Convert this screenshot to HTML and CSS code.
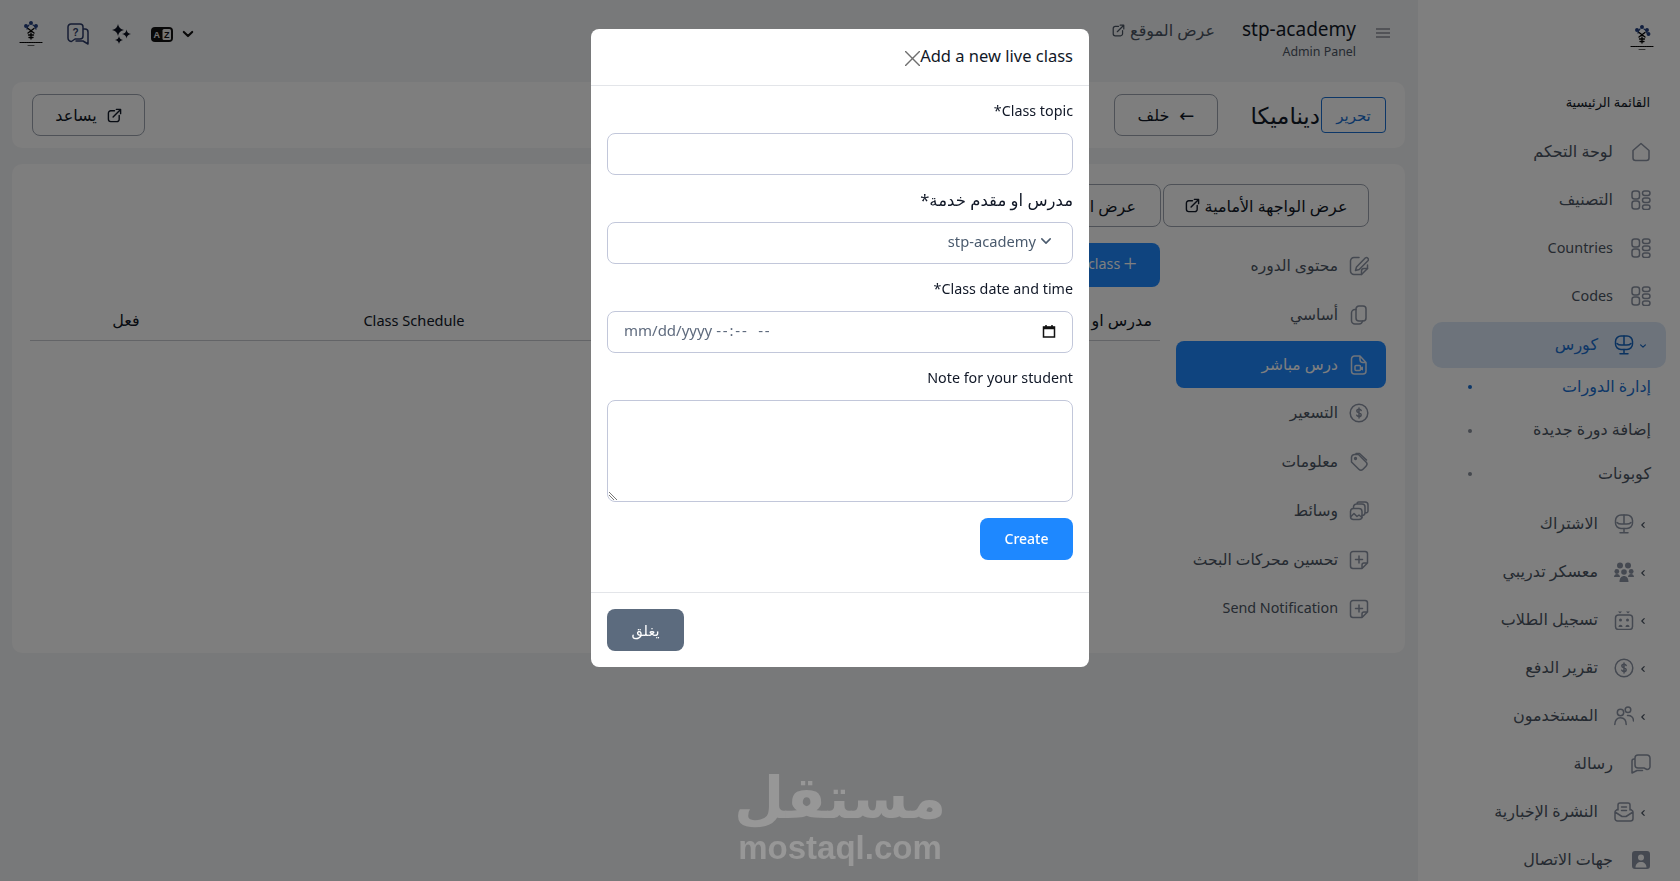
FILE: index.html
```html
<!DOCTYPE html>
<html lang="ar" dir="rtl">
<head>
<meta charset="utf-8">
<title>Add a new live class</title>
<link rel="stylesheet" href="styles.css">
</head>
<body>
<svg class="defs" aria-hidden="true">
  <symbol id="i-home" viewBox="0 0 20 20"><path d="M2 8.500 10 1.500l8 7v7.500a2.500 2.500 0 0 1-2.500 2.500h-11A2.500 2.500 0 0 1 2 16z"/></symbol>
  <symbol id="i-cat" viewBox="0 0 20 20"><rect x="1" y="1" width="7.500" height="8" rx="2.500"/><rect x="1" y="11" width="7.500" height="8" rx="2.500"/><rect x="11.500" y="1" width="7.500" height="4.500" rx="2.200"/><rect x="11.500" y="8" width="7.500" height="4.500" rx="2.200"/><rect x="11.500" y="15" width="7.500" height="4.500" rx="2.200"/></symbol>
  <symbol id="i-course" viewBox="0 0 20 20"><rect x="1.500" y="1" width="17" height="13.500" rx="5.500"/><path d="M10 1v9M3 8.500c2 2.300 4 1.500 7 1.500s5 .8 7-1.500M10 14.500v4M6 18.700h8"/></symbol>
  <symbol id="i-team" viewBox="0 0 20 20"><g class="fill"><circle cx="6" cy="3.500" r="3"/><circle cx="14" cy="3.500" r="3"/><circle cx="2.800" cy="9.500" r="2.400"/><circle cx="17.200" cy="9.500" r="2.400"/><circle cx="10" cy="10" r="2.800"/><path d="M0 15c0-2 1.500-3 3-3s3 1 3 3zM14 15c0-2 1.500-3 3-3s3 1 3 3zM5.500 20c0-4 2-6 4.500-6s4.500 2 4.500 6z"/></g></symbol>
  <symbol id="i-enrol" viewBox="0 0 20 20"><rect x="1.500" y="5" width="17" height="14.500" rx="3"/><circle cx="6.500" cy="10" r="1.500" class="fill"/><circle cx="13.500" cy="10" r="1.500" class="fill"/><path d="M4.500 17c0-3 4-3 4 0zM11.500 17c0-3 4-3 4 0z" class="fill"/><path d="M4 1.500h4L6 3.500zM12 1.500h4L14 3.500z" class="fill"/></symbol>
  <symbol id="i-dollar" viewBox="0 0 20 20"><rect x="1.200" y="1.200" width="17.600" height="17.600" rx="8.800"/><path d="M12.200 7.500c-.3-.9-1.100-1.300-2.200-1.300-1.200 0-2.200.6-2.200 1.800 0 2.500 4.400 1.200 4.400 3.800 0 1.200-1 1.800-2.200 1.800-1.100 0-1.900-.4-2.200-1.300M10 5v10"/></symbol>
  <symbol id="i-users" viewBox="0 0 20 20"><circle cx="6.500" cy="6.500" r="3.200"/><circle cx="14" cy="3.800" r="2.800"/><path d="M.8 18.500c0-4.500 2.500-6.800 5.700-6.800s5.700 2.300 5.700 6.800M13.500 9.500c3.500-.3 6 1.700 6 5.500"/></symbol>
  <symbol id="i-chat" viewBox="0 0 20 20"><path d="M4 1h9a3 3 0 0 1 3 3v7a3 3 0 0 1-3 3H7l-3 1.500A3 3 0 0 1 1 12V4a3 3 0 0 1 3-3zM16 5h1a2 2 0 0 1 2 2v12l-5-2.500H8.500"/></symbol>
  <symbol id="i-news" viewBox="0 0 20 20"><path d="M4 8V3a2 2 0 0 1 2-2h8a2 2 0 0 1 2 2v5M1 10a2 2 0 0 1 1-1.700L4 7M19 10a2 2 0 0 0-1-1.700L16 7M1 10v6.500A2.500 2.500 0 0 0 3.500 19h13a2.500 2.500 0 0 0 2.500-2.500V10l-7 4.500h-4zM7.500 5h5M7.500 8.500h5"/></symbol>
  <symbol id="i-contact" viewBox="0 0 20 20"><path class="fill" fill-rule="evenodd" d="M4 1h12a3 3 0 0 1 3 3v12a3 3 0 0 1-3 3H4a3 3 0 0 1-3-3V4a3 3 0 0 1 3-3zm6 3.500a3 3 0 1 0 0 6 3 3 0 0 0 0-6zM4.500 17.500h11c0-3.500-2.500-5.500-5.500-5.500s-5.500 2-5.500 5.500z"/></symbol>
  <symbol id="i-edit" viewBox="0 0 20 20"><path d="M10 1.500H5A3.500 3.500 0 0 0 1.500 5v10A3.500 3.500 0 0 0 5 18.500h7.500l6-6V9"/><path d="M12.500 18.500V15a2.500 2.500 0 0 1 2.500-2.500h3.500"/><path d="M16.500 1.800 7.500 11l-1 3.500 3.700-1 9-9a2 2 0 0 0-2.700-2.700z"/></symbol>
  <symbol id="i-copy" viewBox="0 0 20 20"><path d="M7 4a3 3 0 0 1 3-3h4a3 3 0 0 1 3 3v9a3 3 0 0 1-3 3h-4a3 3 0 0 1-3-3z"/><path d="M7 4.500H6A3.500 3.500 0 0 0 2.500 8v7.500A3.500 3.500 0 0 0 6 19h4a3.500 3.500 0 0 0 3.500-3"/></symbol>
  <symbol id="i-file" viewBox="0 0 20 20"><path d="M5.500 1H11l6 6.500V16a3 3 0 0 1-3 3H5.500a3 3 0 0 1-3-3V4a3 3 0 0 1 3-3zM11 1v3.500a3 3 0 0 0 3 3h3"/><rect x="6" y="10.500" width="5.500" height="5" rx="1"/><path d="m11.500 12.500 2.500-1v4l-2.500-1z" class="fill"/></symbol>
  <symbol id="i-tag" viewBox="0 0 20 20"><path d="M2.500 5.500a3 3 0 0 1 3-3h4l7.500 7.500a3 3 0 0 1 0 4.200l-3 3a3 3 0 0 1-4.200 0L2.500 10z"/><path d="M7 1.500h3.500l7 6.500"/><circle cx="6.500" cy="6.500" r=".9"/></symbol>
  <symbol id="i-media" viewBox="0 0 20 20"><rect x="1.500" y="7.500" width="11.500" height="11" rx="3"/><path d="M4.500 7V6a3 3 0 0 1 3-3h5.500a3 3 0 0 1 3 3v5.500a3 3 0 0 1-3 3M8 3V2.800A1.800 1.800 0 0 1 9.800 1h6.200A3 3 0 0 1 19 4v6a1.800 1.800 0 0 1-2.800 1.500M2 15.500l3-3 3 3 2-1.500 3 2.500"/></symbol>
  <symbol id="i-plusnote" viewBox="0 0 20 20"><path d="M4 1.500h12A2.500 2.500 0 0 1 18.500 4v9l-5.500 5.500H4A2.500 2.500 0 0 1 1.500 16V4A2.500 2.500 0 0 1 4 1.500zM13 18.500V15a2 2 0 0 1 2-2h3.500M10 6v7M6.500 9.500h7"/></symbol>
  <symbol id="i-ext" viewBox="0 0 16 16"><path d="M8 3H4a2.500 2.500 0 0 0-2.500 2.500V12A2.500 2.500 0 0 0 4 14.500h6.500A2.500 2.500 0 0 0 13 12V8M6.500 9.500 14.500 1.500M10 1.500h4.500V6"/></symbol>
  <symbol id="i-chev" viewBox="0 0 10 10"><path d="M2 3.500 5 6.500 8 3.500"/></symbol>
  <symbol id="i-chevl" viewBox="0 0 10 10"><path d="M6.500 2 3.500 5l3 3"/></symbol>
</svg>

<div class="layout">
  <aside class="sidebar">
    <div class="side-logo">
      <svg class="logo" viewBox="0 0 24 26"><g class="logo-blue"><path d="M8 8a5 5 0 0 1 2-4M14 4a5 5 0 0 1 3 4"/><circle cx="7" cy="5" r="1.300"/><circle cx="12" cy="2" r="1.300"/><circle cx="17" cy="5" r="1.300"/><circle cx="18.500" cy="9" r="1.300"/></g><g class="logo-dark"><path d="M9 7.500 15 12M15 7.500 9 12M12 12v6M9.500 14h5M10 16.500h4"/><path class="logo-line" d="M1 21.500h22"/><path class="logo-short" d="M9 24.500h6"/></g></svg>
    </div>
    <p class="side-title">القائمة الرئيسية</p>
    <nav class="side-nav">
      <a class="side-row"><span class="side-text">لوحة التحكم</span><svg class="ic"><use href="#i-home"/></svg></a>
      <a class="side-row"><span class="side-text">التصنيف</span><svg class="ic"><use href="#i-cat"/></svg></a>
      <a class="side-row"><span class="side-text en">Countries</span><svg class="ic"><use href="#i-cat"/></svg></a>
      <a class="side-row"><span class="side-text en">Codes</span><svg class="ic"><use href="#i-cat"/></svg></a>
      <a class="side-row has-sub is-open"><svg class="chev"><use href="#i-chev"/></svg><svg class="ic"><use href="#i-course"/></svg><span class="side-text">كورس</span></a>
      <ul class="sub-list">
        <li class="sub-row is-current"><span>إدارة الدورات</span><i class="dot"></i></li>
        <li class="sub-row"><span>إضافة دورة جديدة</span><i class="dot"></i></li>
        <li class="sub-row"><span>كوبونات</span><i class="dot"></i></li>
      </ul>
      <a class="side-row has-sub"><svg class="chev"><use href="#i-chevl"/></svg><svg class="ic"><use href="#i-course"/></svg><span class="side-text">الاشتراك</span></a>
      <a class="side-row has-sub"><svg class="chev"><use href="#i-chevl"/></svg><svg class="ic"><use href="#i-team"/></svg><span class="side-text">معسكر تدريبي</span></a>
      <a class="side-row has-sub"><svg class="chev"><use href="#i-chevl"/></svg><svg class="ic"><use href="#i-enrol"/></svg><span class="side-text">تسجيل الطلاب</span></a>
      <a class="side-row has-sub"><svg class="chev"><use href="#i-chevl"/></svg><svg class="ic"><use href="#i-dollar"/></svg><span class="side-text">تقرير الدفع</span></a>
      <a class="side-row has-sub"><svg class="chev"><use href="#i-chevl"/></svg><svg class="ic"><use href="#i-users"/></svg><span class="side-text">المستخدمون</span></a>
      <a class="side-row"><span class="side-text">رسالة</span><svg class="ic flip"><use href="#i-chat"/></svg></a>
      <a class="side-row has-sub"><svg class="chev"><use href="#i-chevl"/></svg><svg class="ic"><use href="#i-news"/></svg><span class="side-text">النشرة الإخبارية</span></a>
      <a class="side-row"><span class="side-text">جهات الاتصال</span><svg class="ic"><use href="#i-contact"/></svg></a>
    </nav>
  </aside>

  <main class="main">
    <header class="topbar">
      <div class="top-right">
        <svg class="burger" viewBox="0 0 14 10"><path d="M0 1h14M0 5h14M0 9h14"/></svg>
        <div class="brand"><strong>stp-academy</strong><small>Admin Panel</small></div>
        <a class="site-link"><span>عرض الموقع</span><svg class="ext-sm"><use href="#i-ext"/></svg></a>
      </div>
      <div class="top-left">
        <svg class="lang-chev"><use href="#i-chev"/></svg>
        <svg class="lang" viewBox="0 0 22 15"><rect x="0" y="0" width="22" height="15" rx="4" fill="#111"/><rect x="11.500" y="2" width="8.500" height="11" rx="1.500" fill="#e8e8e8"/><text x="5.800" y="11" class="lang-a">A</text><text x="15.800" y="11" class="lang-z">Z</text></svg>
        <svg class="sparkle" viewBox="0 0 20 20"><path d="M7 0Q7.800 5.200 13 6 7.800 6.800 7 12 6.200 6.800 1 6 6.200 5.200 7 0zM15.500 5.500Q16 9.500 20 10 16 10.500 15.500 14.500 15 10.500 11 10 15 9.500 15.500 5.500zM8 12Q8.500 15.500 12 16 8.500 16.500 8 20 7.500 16.500 4 16 7.500 15.500 8 12z"/></svg>
        <svg class="help" viewBox="0 0 22 22"><path d="M4 1h9a3 3 0 0 1 3 3v9a3 3 0 0 1-3 3H8l-3.500 2.500A3.500 3.500 0 0 1 1 15V4a3 3 0 0 1 3-3zM16 6h2a3 3 0 0 1 3 3v12l-5-3H9"/><text x="8.500" y="12.500" class="help-q">?</text></svg>
        <svg class="logo logo-top" viewBox="0 0 24 26"><g class="logo-blue"><path d="M8 8a5 5 0 0 1 2-4M14 4a5 5 0 0 1 3 4"/><circle cx="7" cy="5" r="1.300"/><circle cx="12" cy="2" r="1.300"/><circle cx="17" cy="5" r="1.300"/></g><g class="logo-dark"><path d="M9 7.500 15 12M15 7.500 9 12M12 12v6M9.500 14h5M10 16.500h4"/><path class="logo-line" d="M1 21.500h22"/><path class="logo-short" d="M9 24.500h6"/></g></svg>
      </div>
    </header>

    <section class="toolbar">
      <div class="tool-right">
        <button class="btn-edit">تحرير</button>
        <h1 class="course-name">ديناميكا</h1>
        <button class="btn-line btn-back"><span class="arrow">←</span><span>خلف</span></button>
      </div>
      <button class="btn-line btn-help"><svg class="ext"><use href="#i-ext"/></svg><span>يساعد</span></button>
    </section>

    <section class="card">
      <div class="course-nav">
        <a class="course-row"><svg class="ic"><use href="#i-edit"/></svg><span>محتوى الدوره</span></a>
        <a class="course-row"><svg class="ic"><use href="#i-copy"/></svg><span>أساسي</span></a>
        <a class="course-row is-active"><svg class="ic"><use href="#i-file"/></svg><span>درس مباشر</span></a>
        <a class="course-row"><svg class="ic"><use href="#i-dollar"/></svg><span>التسعير</span></a>
        <a class="course-row"><svg class="ic"><use href="#i-tag"/></svg><span>معلومات</span></a>
        <a class="course-row"><svg class="ic"><use href="#i-media"/></svg><span>وسائط</span></a>
        <a class="course-row"><svg class="ic"><use href="#i-plusnote"/></svg><span>تحسين محركات البحث</span></a>
        <a class="course-row"><svg class="ic"><use href="#i-plusnote"/></svg><span class="en">Send Notification</span></a>
      </div>
      <div class="course-main">
        <div class="view-btns">
          <a class="btn-view"><span>عرض الواجهة الأمامية</span><svg class="ext"><use href="#i-ext"/></svg></a>
          <a class="btn-view"><span>عرض الدورة</span><svg class="ext"><use href="#i-ext"/></svg></a>
        </div>
        <div class="add-row"><button class="btn-add"><span class="plus">+</span><span>Add class</span></button></div>
        <div class="table-head">
          <span class="th-ar">مدرس او مقدم خدمة</span>
          <span class="th-c">Class Schedule</span>
          <span class="th-c th-ar">فعل</span>
        </div>
      </div>
    </section>
  </main>
</div>

<div class="overlay">
  <div class="watermark" dir="rtl"><span class="wm-ar">مستقل</span><span class="wm-en">mostaql.com</span></div>
  <div class="modal" dir="rtl">
    <div class="modal-head">
      <h2>Add a new live class</h2>
      <svg class="close" viewBox="0 0 14 14"><path d="M.5.5l13 13M13.500.5l-13 13"/></svg>
    </div>
    <form class="modal-body">
      <div class="field">
        <label>Class topic*</label>
        <div class="control"></div>
      </div>
      <div class="field">
        <label class="label-ar">مدرس او مقدم خدمة*</label>
        <div class="control control-select"><svg class="sel-chev"><use href="#i-chev"/></svg><span class="sel-val">stp-academy</span></div>
      </div>
      <div class="field">
        <label>Class date and time*</label>
        <div class="control control-date" dir="ltr"><span class="dt-text">mm/dd/yyyy <span class="dt-dash">--:-- --</span></span><svg class="cal" viewBox="0 0 14 14"><path d="M1.500 3h11v10h-11z"/><path class="cal-top" d="M1.500 4h11"/><path d="M4 1v2M10 1v2"/></svg></div>
      </div>
      <div class="field">
        <label>Note for your student</label>
        <div class="control control-area"><svg class="grip" viewBox="0 0 8 8"><path d="M0 0l8 8M0 3l5 5"/></svg></div>
      </div>
      <div class="form-end"><button type="button" class="btn-create">Create</button></div>
    </form>
    <div class="modal-foot"><button type="button" class="btn-close">يغلق</button></div>
  </div>
</div>
</body>
</html>
```
FILE: styles.css
```css
* { box-sizing: border-box; }
html, body { margin: 0; height: 881px; overflow: hidden; }
body { font-family: "Noto Sans", "DejaVu Sans", sans-serif; color: #111827; background: #f1f2f4; font-size: 14px; }
button { font-family: inherit; }
p, h1, h2, ul { margin: 0; padding: 0; }
ul { list-style: none; }
.defs { position: absolute; width: 0; height: 0; }
svg { fill: none; stroke: currentColor; stroke-width: 1.5; stroke-linecap: round; stroke-linejoin: round; flex: none; }
.fill { fill: currentColor; stroke: none; }
.ic { width: 20px; height: 20px; color: #8b93a3; }
.flip { transform: scaleX(-1); }
.en { font-size: 14.400px; }

.layout { display: flex; height: 881px; }

/* sidebar */
.sidebar { width: 262px; flex: none; background: #fff; height: 881px; overflow: hidden; }
.side-logo { height: 82px; display: flex; align-items: flex-start; padding: 25px 26px 0 0; }
.logo { width: 24px; height: 26px; stroke-width: 1.300; }
.logo-blue { stroke: #24407f; fill: #24407f; }
.logo-dark { stroke: #000; }
.logo-line { stroke-width: 1.200; stroke-dasharray: 1.500 .8; }
.logo-short { stroke-width: .6; }
.side-title { height: 46px; padding: 11px 30px 0 0; font-size: 13px; line-height: 18px; color: #111827; }
.side-nav { display: flex; flex-direction: column; }
.side-row { height: 48px; display: flex; align-items: center; padding-right: 29px; gap: 18px; font-size: 16px; flex-direction: row-reverse; justify-content: flex-end; }
.side-text { color: #4b5563; padding-bottom: 2px; }
.has-sub { flex-direction: row; justify-content: flex-start; padding-right: 0; gap: 0; }
.has-sub .chev { width: 8px; height: 8px; margin: 2px 33px 0 0; stroke-width: 1.500; color: #4b5563; }
.has-sub .ic { margin: 0 5px 0 0; }
.has-sub .side-text { margin-right: 16px; }
.is-open { height: 46px; margin: 2px 14px 0 14px; background: #dbe7f6; border-radius: 10px; }
.is-open .chev, .is-open .ic { color: #1565c0; }
.is-open .chev { margin-right: 19px; }
.is-open .side-text { color: #1a6fd0; }
.sub-list { padding: 0 29px 7px 0; display: flex; flex-direction: column; gap: 5.500px; }
.sub-row { height: 38px; display: flex; justify-content: space-between; align-items: center; padding-left: 50px; color: #4b5563; font-size: 16px; white-space: nowrap; }
.sub-row span { padding-bottom: 3px; }
.dot { width: 4px; height: 4px; border-radius: 50%; background: #8a919c; }
.is-current { color: #1a6fd0; }
.is-current .dot { background: #1a6fd0; }

/* main */
.main { flex: 1; min-width: 0; padding: 0 13px 0 12px; }
.topbar { height: 82px; display: flex; justify-content: space-between; padding-right: 15px; }
.top-right { display: flex; align-items: flex-start; }
.burger { width: 14px; height: 10px; margin: 28px 0 0 0; color: #8b8f96; }
.brand { display: flex; flex-direction: column; margin: 15px 20px 0 0; width: 114px; }
.brand strong { font-weight: 400; font-size: 19px; line-height: 28px; color: #111827; white-space: nowrap; }
.brand small { font-size: 12.400px; line-height: 16px; color: #4b5563; margin-top: 1px; }
.site-link { display: flex; align-items: center; gap: 5px; margin: 20px 27px 0 0; height: 20px; color: #4b5563; font-size: 16px; }
.ext-sm { width: 13px; height: 13px; }
.top-left { display: flex; align-items: center; height: 68px; padding-left: 7px; }
.lang-chev { width: 14px; height: 14px; color: #111; }
.lang { width: 22px; height: 15px; margin-right: 8px; stroke: none; }
.lang-a, .lang-z { font-family: "Liberation Sans", sans-serif; font-size: 9px; font-weight: 700; text-anchor: middle; stroke: none; }
.lang-a { fill: #e8e8e8; }
.lang-z { fill: #111; }
.sparkle { width: 20px; height: 20px; margin-right: 20px; fill: #0b1020; stroke: none; }
.help { width: 22px; height: 22px; margin-right: 22px; color: #2b3a67; stroke-width: 1.500; }
.help-q { font-family: "Liberation Sans", sans-serif; font-size: 10px; font-weight: 700; text-anchor: middle; fill: #2b3a67; stroke: none; }
.logo-top { margin-right: 24px; }

.toolbar { height: 66px; background: #fcfcfc; border-radius: 10px; display: flex; justify-content: space-between; align-items: center; padding: 0 19px 0 20px; }
.tool-right { display: flex; align-items: center; }
.btn-edit { width: 65px; height: 36px; background: transparent; border: 1px solid #1a6fd0; border-radius: 4px; color: #1a6fd0; font-size: 15px; }
.course-name { font-size: 23px; font-weight: 400; margin: 0 1px 0 31px; color: #111827; width: 71px; white-space: nowrap; }
.btn-line { height: 42px; background: transparent; border: 1px solid #9ca3af; border-radius: 8px; display: flex; align-items: center; justify-content: center; gap: 10px; color: #111827; font-size: 16px; }
.btn-back { width: 104px; flex-direction: row; }
.arrow { font-size: 18px; line-height: 1; }
.btn-help { width: 113px; }
.ext { width: 15px; height: 15px; }

.card { height: 489px; margin-top: 16px; background: #fcfcfc; border-radius: 10px; display: flex; padding: 20px 19px 0 18px; }
.course-nav { width: 210px; flex: none; margin-top: 57px; display: flex; flex-direction: column; }
.course-row { height: 49px; display: flex; align-items: center; gap: 11px; padding-right: 17px; color: #4b5563; font-size: 15.500px; }
.course-row span { padding-bottom: 2px; }
.course-row .en { font-size: 14.300px; }
.is-active { height: 47px; margin-top: 2px; background: #1e88ff; border-radius: 8px; color: #fff; }
.is-active .ic { color: #dfe8f6; }
.course-main { flex: 1; min-width: 0; margin-right: 16px; display: flex; flex-direction: column; }
.view-btns { display: flex; gap: 2px; margin-right: -209px; }
.btn-view { height: 43px; width: 206px; padding: 0 24px 0 15px; display: flex; align-items: center; gap: 5px; border: 1px solid #9ca3af; border-radius: 8px; color: #111827; font-size: 16px; white-space: nowrap; overflow: hidden; }
.btn-view:first-child { justify-content: center; padding: 0 15px; }
.add-row { display: flex; margin-top: 16px; }
.btn-add { width: 170px; height: 44px; border: 0; background: #1e88ff; border-radius: 8px; color: #fff; font-size: 14.300px; display: flex; align-items: center; justify-content: flex-start; gap: 3px; padding: 0 23px 4px 0; }
.plus { font-size: 24px; line-height: 1; font-weight: 300; }
.table-head { display: grid; grid-template-columns: 1fr 384px 192px; align-items: center; height: 54px; padding: 12px 8px 0 0; border-bottom: 1px solid #c6c9cf; color: #111827; font-size: 14.600px; }
.th-ar { font-size: 16px; }
.th-c { text-align: center; }

/* overlay */
.overlay { position: fixed; inset: 0; background: rgba(0, 0, 0, .5); }
.watermark { position: absolute; left: 739px; top: 765px; width: 202px; display: flex; flex-direction: column; align-items: center; color: #979797; font-weight: 700; white-space: nowrap; }
.wm-ar { font-family: "DejaVu Sans", sans-serif; font-size: 58px; line-height: 66px; }
.wm-en { font-family: "Liberation Sans", sans-serif; font-size: 33px; line-height: 34px; }

.modal { position: absolute; left: 591px; top: 29px; width: 498px; height: 638px; background: #fff; border-radius: 8px; display: flex; flex-direction: column; }
.modal-head { height: 57px; flex: none; border-bottom: 1px solid #e3e5e9; display: flex; align-items: center; padding: 0 16px 4px; }
.modal-head h2 { font-size: 16.500px; font-weight: 400; color: #111827; white-space: nowrap; }
.close { width: 15px; height: 15px; color: #6f6f6f; stroke-width: 1.300; margin-top: 6px; }
.modal-body { padding: 15px 16px 0; height: 507px; flex: none; display: flex; flex-direction: column; border-bottom: 1px solid #e3e5e9; }
.field { display: flex; flex-direction: column; }
.field label { height: 20px; line-height: 20px; margin-bottom: 12px; font-size: 14.300px; color: #111827; }
.field .label-ar { font-size: 16.500px; }
.control { height: 42px; border: 1px solid #c2c7da; border-radius: 8px; margin-bottom: 15px; display: flex; align-items: center; background: #fff; }
.control-select { padding: 0 19px 4px 0; gap: 3px; color: #4b5b6e; font-size: 14.700px; }
.sel-chev { width: 14px; height: 14px; color: #4b5b6e; stroke-width: 1.100; }
.control-date { padding: 0 16px 0; justify-content: space-between; color: #5f6b7e; font-size: 15px; }
.dt-text { padding-bottom: 4px; white-space: pre; }
.dt-dash { letter-spacing: 1.800px; word-spacing: 4px; }
.cal { width: 14px; height: 14px; color: #111; stroke-width: 1.500; stroke-linecap: butt; stroke-linejoin: miter; margin-bottom: 2px; }
.cal-top { stroke-width: 2.500; }
.control-area { height: 102px; margin-bottom: 16px; align-items: flex-end; position: relative; }
.grip { position: absolute; left: 1px; bottom: 1px; width: 8px; height: 8px; color: #555; stroke-width: .8; }
.form-end { display: flex; justify-content: flex-start; }
.btn-create { width: 93px; height: 42px; border: 0; border-radius: 8px; background: #1e88ff; color: #fff; font-size: 14px; font-weight: 500; padding-bottom: 3px; }
.modal-foot { padding: 16px; display: flex; justify-content: flex-end; }
.btn-close { width: 77px; height: 42px; border: 0; border-radius: 8px; background: #5c6b7e; color: #fff; font-size: 14.500px; }
```
